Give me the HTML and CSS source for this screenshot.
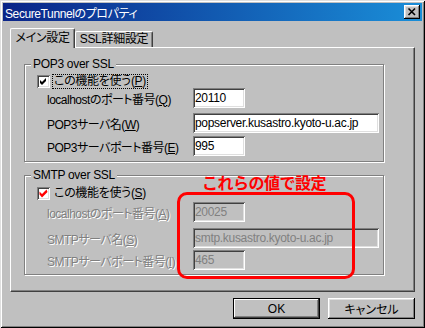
FILE: index.html
```html
<!DOCTYPE html>
<html>
	<head>
		<meta charset="utf-8" />
		<title>SecureTunnelのプロパティ</title>
		<link rel="stylesheet" href="styles.css">
	</head>
	<body>
		<div class="window">
			<div class="titlebar">
				<span class="title">SecureTunnelのプロパティ</span>
				<span class="close">
					<svg width="16" height="14" viewBox="0 0 16 14"><path d="M4.5 3.5 L11 10 M11 3.5 L4.5 10" stroke="#000" stroke-width="1.6" fill="none"/></svg>
				</span>
			</div>
			<div class="body">
				<!--タブ-->
				<div class="tabs">
					<div class="tab active">メイン設定</div>
					<div class="tab">SSL詳細設定</div>
				</div>
				<div class="panel">
					<!--POP3-->
					<div class="group pop">
						<span class="group-title">POP3 over SSL</span>
						<div class="check">
							<span class="box">
								<svg width="9" height="9" viewBox="0 0 9 9"><polygon points="1,3 3,5 7,1 7,4 3,8 1,6" fill="#000"/></svg>
							</span>
							<span class="check-text focus">この機能を使う(<u>P</u>)</span>
						</div>
						<div class="field">
							<span class="label">localhostのポート番号(<u>Q</u>)</span>
							<input class="short" type="text" value="20110" />
						</div>
						<div class="field f2">
							<span class="label">POP3サーバ名(<u>W</u>)</span>
							<input class="long" type="text" value="popserver.kusastro.kyoto-u.ac.jp" />
						</div>
						<div class="field f3">
							<span class="label">POP3サーバポート番号(<u>E</u>)</span>
							<input class="short" type="text" value="995" />
						</div>
					</div>
					<!--SMTP-->
					<div class="group smtp">
						<span class="group-title">SMTP over SSL</span>
						<div class="check">
							<span class="box red">
								<svg width="9" height="9" viewBox="0 0 9 9"><polygon points="0.5,2.5 3,5 7.5,0.5 8.5,3 3,8.5 0.5,5.5" fill="#f00"/></svg>
							</span>
							<span class="check-text">この機能を使う(<u>S</u>)</span>
						</div>
						<div class="field f1 off">
							<span class="label">localhostのポート番号(<u>A</u>)</span>
							<input class="short" type="text" value="20025" disabled />
						</div>
						<div class="field f2 off">
							<span class="label">SMTPサーバ名(<u>S</u>)</span>
							<input class="long" type="text" value="smtp.kusastro.kyoto-u.ac.jp" disabled />
						</div>
						<div class="field f3 off">
							<span class="label">SMTPサーバポート番号(<u>I</u>)</span>
							<input class="short" type="text" value="465" disabled />
						</div>
					</div>
				</div>
				<div class="buttons">
					<button class="btn default">OK</button>
					<button class="btn">キャンセル</button>
				</div>
			</div>
			<!--注釈-->
			<div class="note">これらの値で設定</div>
			<div class="note-box"></div>
		</div>
	</body>
</html>
```
FILE: styles.css
```css
*{
	margin: 0;
	padding: 0;
	box-sizing: border-box;
}
body {
	background: #c0c0c0;
}
.window {
	position: relative;
	width: 425px;
	height: 328px;
	padding: 3px;
	background: #c0c0c0;
	box-shadow: inset 1px 1px #dfdfdf, inset -1px -1px #000, inset 2px 2px #fff, inset -2px -2px #808080;
	font: 12px "Liberation Sans", "Noto Sans CJK JP", sans-serif;
	font-feature-settings: "palt";
	letter-spacing: -0.3px;
	color: #000;
}
.titlebar {
	height: 18px;
	display: flex;
	align-items: center;
	justify-content: space-between;
	padding: 0 2px;
	background: linear-gradient(to right, #0a2488, #1a8ed8);
	color: #fff;
}
.title {
	letter-spacing: -0.4px;
}
.close {
	display: block;
	width: 16px;
	height: 14px;
	background: #c0c0c0;
	box-shadow: inset -1px -1px #000, inset 1px 1px #fff, inset -2px -2px #808080, inset 2px 2px #dfdfdf;
}
.close svg {
	display: block;
}
.body {
	padding: 0 7px;
}
/*タブ*/
.tabs {
	display: flex;
	align-items: flex-end;
	height: 26px;
}
.tab {
	position: relative;
	width: 78px;
	height: 16px;
	line-height: 15px;
	text-align: center;
	background: #c0c0c0;
	border-top: 1px solid #fff;
	border-left: 1px solid #fff;
	border-right: 1px solid #404040;
	border-radius: 2px 2px 0 0;
	box-shadow: inset -1px 0 #808080;
}
.tab.active {
	width: 65px;
	height: 20px;
	line-height: 19px;
	margin-bottom: -1px;
	z-index: 1;
}
.panel {
	height: 245px;
	padding: 16px 0 0 13px;
	border-top: 1px solid #fff;
	border-left: 1px solid #fff;
	border-right: 1px solid #404040;
	border-bottom: 1px solid #404040;
	box-shadow: inset -1px -1px #808080;
}
/*グループ*/
.group {
	position: relative;
	width: 360px;
	border: 1px solid #808080;
	box-shadow: inset 1px 1px #fff, 1px 1px #fff;
	padding-left: 12px;
}
.group.pop {
	height: 98px;
	padding-top: 9px;
}
.group.smtp {
	height: 100px;
	margin-top: 13px;
	padding-top: 10px;
}
.group-title {
	position: absolute;
	top: -8px;
	left: 6px;
	padding: 0 2px;
	line-height: 14px;
	background: #c0c0c0;
}
.check {
	display: flex;
	align-items: center;
	height: 14px;
}
.box {
	width: 13px;
	height: 13px;
	padding: 2px;
	background: #fff;
	box-shadow: inset 1px 1px #808080, inset -1px -1px #fff, inset 2px 2px #404040, inset -2px -2px #dfdfdf;
}
.box svg {
	display: block;
}
.check-text {
	margin-left: 2px;
	padding: 0 1px;
	line-height: 13px;
	border: 1px dotted transparent;
}
.check-text.focus {
	border-color: #000;
}
.field {
	display: flex;
	align-items: center;
	padding-left: 10px;
	height: 20px;
}
.pop .f2 {
	margin-top: 5px;
}
.pop .f3 {
	margin-top: 3px;
}
.smtp .f1 {
	margin-top: 2px;
}
.smtp .f2 {
	margin-top: 6px;
}
.smtp .f3 {
	margin-top: 2px;
}
.label {
	width: 146px;
	white-space: nowrap;
	letter-spacing: -0.5px;
}
.off .label {
	color: #808080;
	text-shadow: 1px 1px 0 #fff;
}
input {
	height: 20px;
	padding: 0 1px;
	font: 12px "Liberation Sans", sans-serif;
	letter-spacing: -0.3px;
	color: #000;
	background: #fff;
	border: 0;
	outline: 0;
	box-shadow: inset 1px 1px #808080, inset -1px -1px #fff, inset 2px 2px #404040, inset -2px -2px #dfdfdf;
	padding-left: 2px;
}
input.short {
	width: 52px;
}
input.long {
	width: 186px;
}
input:disabled {
	background: #c0c0c0;
	color: #808080;
	-webkit-text-fill-color: #808080;
	opacity: 1;
}
/*ボタン*/
.buttons {
	display: flex;
	justify-content: flex-end;
	gap: 8px;
	margin-top: 6px;
}
.btn {
	width: 87px;
	height: 21px;
	font: inherit;
	background: #c0c0c0;
	border: 0;
	box-shadow: inset -1px -1px #000, inset 1px 1px #fff, inset -2px -2px #808080, inset 2px 2px #dfdfdf;
}
.btn.default {
	border: 1px solid #000;
	box-shadow: inset -1px -1px #404040, inset 1px 1px #fff, inset -2px -2px #808080;
}
/*注釈*/
.note {
	position: absolute;
	left: 202px;
	top: 175px;
	font-size: 16px;
	line-height: 18px;
	font-weight: bold;
	font-feature-settings: normal;
	color: #f00;
	letter-spacing: -0.5px;
}
.note-box {
	position: absolute;
	left: 177px;
	top: 192px;
	width: 178px;
	height: 87px;
	border: 3px solid #f00;
	border-radius: 10px;
}
```
